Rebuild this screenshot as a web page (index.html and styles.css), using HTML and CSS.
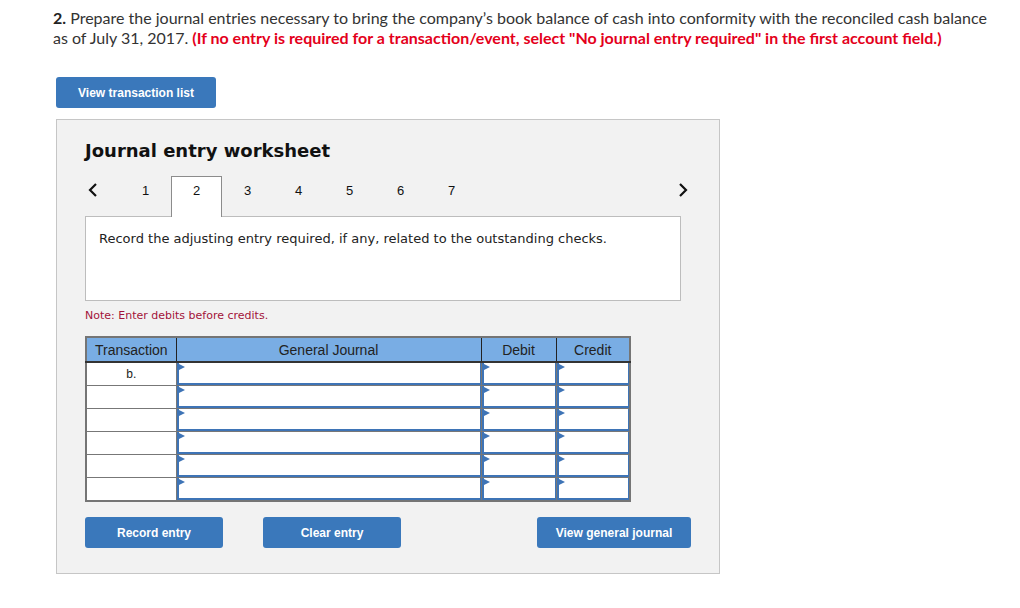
FILE: index.html
```html
<!DOCTYPE html>
<html>
<head>
<meta charset="utf-8">
<link rel="stylesheet" href="styles.css">
</head>
<body>
<div class="page">
  <p class="question"><b>2.</b> Prepare the journal entries necessary to bring the company’s book balance of cash into conformity with the reconciled cash balance as of July 31, 2017. <span class="warn">(If no entry is required for a transaction/event, select "No journal entry required" in the first account field.)</span></p>

  <button class="btn btn-list">View transaction list</button>

  <div class="panel">
    <h2 class="title">Journal entry worksheet</h2>

    <div class="tabs">
      <span class="arrow">
        <svg width="12" height="16" viewBox="0 0 12 16"><path d="M9 2 L3 8 L9 14" fill="none" stroke="#111" stroke-width="2.2"/></svg>
      </span>
      <span class="tab">1</span>
      <span class="tab active">2</span>
      <span class="tab">3</span>
      <span class="tab">4</span>
      <span class="tab">5</span>
      <span class="tab">6</span>
      <span class="tab">7</span>
      <span class="spacer"></span>
      <span class="arrow arrow-right">
        <svg width="12" height="16" viewBox="0 0 12 16"><path d="M3 2 L9 8 L3 14" fill="none" stroke="#111" stroke-width="2.2"/></svg>
      </span>
    </div>

    <div class="prompt">Record the adjusting entry required, if any, related to the outstanding checks.</div>

    <p class="note">Note: Enter debits before credits.</p>

    <table class="journal">
      <thead>
        <tr>
          <th class="c-tr">Transaction</th>
          <th class="c-gj">General Journal</th>
          <th class="c-dr">Debit</th>
          <th class="c-cr">Credit</th>
        </tr>
      </thead>
      <tbody>
        <tr><td class="tr">b.</td><td><div class="inp"></div></td><td><div class="inp"></div></td><td><div class="inp"></div></td></tr>
        <tr><td class="tr"></td><td><div class="inp"></div></td><td><div class="inp"></div></td><td><div class="inp"></div></td></tr>
        <tr><td class="tr"></td><td><div class="inp"></div></td><td><div class="inp"></div></td><td><div class="inp"></div></td></tr>
        <tr><td class="tr"></td><td><div class="inp"></div></td><td><div class="inp"></div></td><td><div class="inp"></div></td></tr>
        <tr><td class="tr"></td><td><div class="inp"></div></td><td><div class="inp"></div></td><td><div class="inp"></div></td></tr>
        <tr><td class="tr"></td><td><div class="inp"></div></td><td><div class="inp"></div></td><td><div class="inp"></div></td></tr>
      </tbody>
    </table>

    <div class="actions">
      <button class="btn btn-record">Record entry</button>
      <button class="btn btn-clear">Clear entry</button>
      <span class="spacer"></span>
      <button class="btn btn-view">View general journal</button>
    </div>
  </div>
</div>
</body>
</html>
```

FILE: styles.css
```css
* { box-sizing: border-box; }
html, body { margin: 0; padding: 0; background: #fff; }
.page { padding: 8px 0 0 53px; }

.question {
  margin: 0;
  width: 940px;
  font-family: Lato, "Open Sans", sans-serif;
  font-size: 16px;
  line-height: 20px;
  color: #333;
}
.question b { font-weight: 700; color: #222; }
.warn { color: #e4001b; font-weight: 700; }

.btn {
  display: inline-flex;
  align-items: center;
  justify-content: center;
  height: 31px;
  border: none;
  border-radius: 3px;
  background: #3a78bb;
  color: #fff;
  font-family: "Liberation Sans", Arial, sans-serif;
  font-weight: 700;
  font-size: 12px;
  padding: 0;
}
.btn-list { margin: 29px 0 0 3px; width: 160px; }

.panel {
  margin: 11px 0 0 3px;
  width: 664px;
  height: 455px;
  background: #f2f2f2;
  border: 1px solid #c6c6c6;
  padding: 19px 38px 0 28px;
}
.title {
  margin: 0;
  font-family: "DejaVu Sans", Verdana, sans-serif;
  font-weight: 700;
  font-size: 18px;
  line-height: 24px;
  color: #111;
}

.tabs {
  display: flex;
  align-items: flex-start;
  margin-top: 13px;
  height: 40px;
  width: 610px;
}
.arrow {
  width: 35px;
  height: 28px;
  display: flex;
  align-items: center;
  padding-left: 2px;
}
.arrow-right { width: 18px; padding-left: 0; }
.spacer { flex: 1; }
.tab {
  width: 51px;
  height: 41px;
  padding-top: 7px;
  display: flex;
  align-items: flex-start;
  justify-content: center;
  font-family: "Liberation Sans", Arial, sans-serif;
  font-size: 13px;
  line-height: 15px;
  color: #111;
}
.tab.active {
  background: #fff;
  border: 1px solid #8c8c8c;
  border-bottom: none;
  padding-top: 6px;
  position: relative;
  z-index: 2;
}

.prompt {
  width: 596px;
  height: 85px;
  background: #fff;
  border: 1px solid #bdbdbd;
  padding: 14px 0 0 13px;
  font-family: "DejaVu Sans", Verdana, sans-serif;
  font-size: 13px;
  color: #222;
}

.note {
  margin: 8px 0 0 0;
  font-family: "DejaVu Sans", Verdana, sans-serif;
  font-size: 11px;
  line-height: 14px;
  color: #a3123a;
}

.journal {
  margin-top: 13px;
  border-collapse: collapse;
  border: 2px solid #757575;
  font-family: "Liberation Sans", Arial, sans-serif;
  font-size: 14px;
}
.journal th {
  height: 25px;
  padding: 0;
  background: #79ade4;
  color: #222;
  font-weight: 400;
  border-left: 1px solid #222;
  border-bottom: 2px solid #333;
  text-align: center;
}
.journal th:first-child { border-left: none; }
.c-tr { width: 90px; }
.c-gj { width: 305px; }
.c-dr { width: 75px; }
.c-cr { width: 74px; }
.journal td {
  height: 23px;
  padding: 0;
  background: #fff;
  border: 1px solid #777;
  vertical-align: top;
}
.journal td.tr {
  text-align: center;
  vertical-align: middle;
  color: #222;
  font-size: 12px;
}
.inp {
  position: relative;
  height: 22px;
  border-left: 2px solid #3e74b6;
  border-bottom: 2px solid #3e74b6;
  border-right: 1px solid #3e74b6;
  background: #fff;
}
.inp::before {
  content: "";
  position: absolute;
  left: 0;
  top: 1px;
  border-left: 6px solid #3e74b6;
  border-top: 3px solid transparent;
  border-bottom: 3px solid transparent;
}

.actions {
  display: flex;
  margin-top: 15px;
  width: 606px;
}
.btn-record { width: 138px; }
.btn-clear { width: 138px; margin-left: 40px; }
.btn-view { width: 154px; }
```
